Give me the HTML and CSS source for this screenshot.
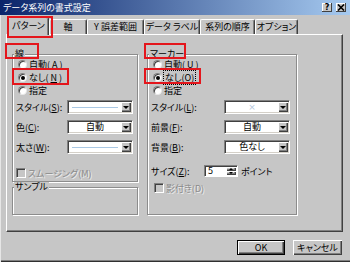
FILE: index.html
```html
<!DOCTYPE html>
<html lang="ja">
<head>
    <meta charset="UTF-8">
    <title>データ系列の書式設定</title>
    <link rel="stylesheet" href="styles.css">
</head>
<body>
    <div class="window">
        <div class="titlebar">
            <span class="title">データ系列の書式設定</span>
            <span class="tb-btns">
                <span class="tb-btn">?</span>
                <span class="tb-btn">
                    <svg width="8" height="7" viewBox="0 0 8 7"><path d="M1 0.5 L7 6.5 M7 0.5 L1 6.5" stroke="#000" stroke-width="1.6"/></svg>
                </span>
            </span>
        </div>

        <div class="tabs">
            <div class="tab active">パターン</div>
            <div class="tab">軸</div>
            <div class="tab">Y 誤差範囲</div>
            <div class="tab">データ ラベル</div>
            <div class="tab">系列の順序</div>
            <div class="tab">オプション</div>
        </div>

        <div class="panel">
            <div class="col-left">
                <fieldset class="group g-line">
                    <legend>線</legend>
                    <div class="opt"><span class="radio"></span>自動(<u>A</u>)</div>
                    <div class="opt"><span class="radio on"></span>なし(<u>N</u>)</div>
                    <div class="opt"><span class="radio"></span>指定</div>
                    <div class="field first">
                        <span class="lbl">スタイル(<u>S</u>):</span>
                        <span class="combo"><span class="val line"></span><span class="arrow"></span></span>
                    </div>
                    <div class="field">
                        <span class="lbl">色(<u>C</u>):</span>
                        <span class="combo"><span class="val">自動</span><span class="arrow"></span></span>
                    </div>
                    <div class="field">
                        <span class="lbl">太さ(<u>W</u>):</span>
                        <span class="combo"><span class="val line"></span><span class="arrow"></span></span>
                    </div>
                    <div class="check smooth"><span class="box"></span>スムージング(M)</div>
                </fieldset>
                <fieldset class="group g-sample">
                    <legend>サンプル</legend>
                </fieldset>
            </div>

            <fieldset class="group g-marker">
                <legend>マーカー</legend>
                <div class="opt"><span class="radio"></span>自動(<u>U</u>)</div>
                <div class="opt"><span class="radio on"></span><span class="focus">なし(<u>O</u>)</span></div>
                <div class="opt"><span class="radio"></span>指定</div>
                <div class="field first">
                    <span class="lbl">スタイル(<u>L</u>):</span>
                    <span class="combo"><span class="val cross">×</span><span class="arrow"></span></span>
                </div>
                <div class="field">
                    <span class="lbl">前景(<u>F</u>):</span>
                    <span class="combo"><span class="val">自動</span><span class="arrow"></span></span>
                </div>
                <div class="field">
                    <span class="lbl">背景(<u>B</u>):</span>
                    <span class="combo"><span class="val">色なし</span><span class="arrow"></span></span>
                </div>
                <div class="size-row">
                    <span class="lbl">サイズ(<u>Z</u>):</span>
                    <span class="spin">
                        <span class="num">5</span>
                        <span class="arrows"><span class="up"></span><span class="down"></span></span>
                    </span>
                    <span class="unit">ポイント</span>
                </div>
                <div class="check shadow"><span class="box"></span>影付き(D)</div>
            </fieldset>
        </div>

        <div class="buttons">
            <button type="button" class="btn default">OK</button>
            <button type="button" class="btn cancel">キャンセル</button>
        </div>

        <!-- 赤枠の注記 -->
        <div class="mark m-tab"></div>
        <div class="mark m-line"></div>
        <div class="mark m-none1"></div>
        <div class="mark m-marker"></div>
        <div class="mark m-none2"></div>
    </div>
</body>
</html>
```

FILE: styles.css
```css
* {
    box-sizing: border-box;
}

body {
    margin: 0;
    background-color: #c6c6c6;
    font-family: "Noto Sans CJK JP", "Noto Sans", sans-serif;
    font-size: 9px;
    font-feature-settings: "palt";
    color: #000;
}

.window {
    position: relative;
    width: 350px;
    height: 262px;
    background-color: #c6c6c6;
    box-shadow: inset 1px 0 #e6e6e6, inset 0 -1px #303030, inset 0 -2px #808080;
    overflow: hidden;
}

/* タイトルバー */
.titlebar {
    height: 15px;
    display: flex;
    align-items: center;
    justify-content: space-between;
    padding: 0 4px 0 3px;
    background: linear-gradient(to right, #0a246a, #a6caf0);
    color: #fff;
}

.title {
    line-height: 15px;
}

.tb-btns {
    display: flex;
    gap: 4px;
}

.tb-btn {
    width: 10px;
    height: 9px;
    display: flex;
    align-items: center;
    justify-content: center;
    background-color: #c6c6c6;
    box-shadow: inset -1px -1px #404040, inset 1px 1px #fff;
    color: #000;
    font: bold 8px/9px "DejaVu Sans", sans-serif;
}

/* タブ */
.tabs {
    height: 19px;
    display: flex;
    align-items: flex-end;
    padding-left: 8px;
}

.tab {
    height: 15px;
    line-height: 13px;
    text-align: center;
    border-top: 1px solid #fff;
    border-left: 1px solid #fff;
    border-right: 1px solid #404040;
    border-radius: 2px 2px 0 0;
    box-shadow: inset -1px 0 #808080;
}

.tab:nth-child(1) { width: 41px; }
.tab:nth-child(2) { width: 38px; }
.tab:nth-child(3) { width: 57px; }
.tab:nth-child(4) { width: 56px; }
.tab:nth-child(5) { width: 55px; }
.tab:nth-child(6) { width: 43px; }

.tab.active {
    position: relative;
    height: 18px;
    margin-bottom: -1px;
    line-height: 15px;
    background-color: #c6c6c6;
}

/* パネル */
.panel {
    height: 198px;
    margin: 0 7px 0 6px;
    padding: 14px 0 16px 5px;
    display: flex;
    gap: 9px;
    border: 1px solid;
    border-color: #fff #404040 #404040 #fff;
    box-shadow: inset -1px -1px #808080;
}

.col-left {
    width: 126px;
    display: flex;
    flex-direction: column;
}

.group {
    margin: 0;
    padding: 0;
    min-width: 0;
    border: 1px solid #8c8c8c;
    box-shadow: 1px 1px #fff, inset 1px 1px #fff;
}

.group legend {
    margin-left: 1px;
    padding: 0 1px;
    line-height: 10px;
    background-color: #c6c6c6;
}

.group legend + .opt {
    margin-top: -1px;
}

.g-line {
    padding-bottom: 2px;
}

.g-sample {
    flex: 1;
}

.g-marker {
    width: 150px;
}

/* ラジオボタン */
.opt {
    height: 13px;
    display: flex;
    align-items: center;
    gap: 2px;
    padding-left: 5px;
}

.radio {
    position: relative;
    width: 9px;
    height: 9px;
    border-radius: 50%;
    background-color: #fff;
    border: 1px solid;
    border-color: #808080 #e8e8e8 #e8e8e8 #808080;
    box-shadow: inset 1px 1px #404040;
}

.radio.on::after {
    content: "";
    position: absolute;
    left: 2px;
    top: 2px;
    width: 4px;
    height: 4px;
    border-radius: 50%;
    background-color: #000;
}

.focus {
    outline: 1px dotted #000;
    padding: 0 1px;
}

/* コンボボックス */
.field {
    height: 14px;
    margin-top: 6px;
    display: flex;
    align-items: center;
    padding-left: 3px;
}

.field.first {
    margin-top: 3px;
}

.g-line .lbl {
    width: 51px;
}

.g-marker .field .lbl {
    width: 73px;
}

.combo {
    width: 66px;
    height: 14px;
    display: flex;
    padding: 1px;
    background-color: #fff;
    border: 1px solid;
    border-color: #808080 #fff #fff #808080;
    box-shadow: inset 1px 1px #404040, inset -1px -1px #d4d0c8;
}

.combo .val {
    flex: 1;
    text-align: center;
    line-height: 10px;
}

.combo .val.line {
    margin: 0 3px;
    background: linear-gradient(#a9c8e4, #a9c8e4) center / 100% 1px no-repeat;
}

.combo .val.cross {
    color: #b4c6dc;
    font-family: "DejaVu Sans", sans-serif;
}

.combo .arrow,
.spin .up,
.spin .down {
    position: relative;
    background-color: #c6c6c6;
    box-shadow: inset 1px 1px #fff, inset -1px -1px #404040, inset -2px -2px #808080;
}

.combo .arrow {
    width: 10px;
}

.combo .arrow::after {
    content: "";
    position: absolute;
    left: 2px;
    top: 4px;
    border-left: 3px solid transparent;
    border-right: 3px solid transparent;
    border-top: 3px solid #000;
}

/* サイズ */
.size-row {
    height: 12px;
    margin-top: 11px;
    display: flex;
    align-items: center;
    padding-left: 3px;
}

.size-row .lbl {
    width: 53px;
}

.spin {
    width: 34px;
    height: 12px;
    display: flex;
    padding: 1px;
    background-color: #fff;
    border: 1px solid;
    border-color: #808080 #fff #fff #808080;
    box-shadow: inset 1px 1px #404040;
}

.spin .num {
    flex: 1;
    padding-left: 2px;
    line-height: 8px;
}

.spin .arrows {
    width: 10px;
    display: flex;
    flex-direction: column;
}

.spin .up,
.spin .down {
    flex: 1;
}

.spin .up::after,
.spin .down::after {
    content: "";
    position: absolute;
    left: 3px;
    top: 1px;
    border-left: 2px solid transparent;
    border-right: 2px solid transparent;
}

.spin .up::after {
    border-bottom: 2px solid #000;
}

.spin .down::after {
    border-top: 2px solid #000;
}

.unit {
    margin-left: 3px;
}

/* チェックボックス(無効) */
.check {
    height: 12px;
    display: flex;
    align-items: center;
    gap: 2px;
    color: #8a8a8a;
    text-shadow: 1px 1px #eee;
}

.check .box {
    width: 10px;
    height: 10px;
    border: 1px solid;
    border-color: #808080 #fff #fff #808080;
    box-shadow: inset 1px 1px #404040;
    background-color: #c6c6c6;
}

.check.smooth {
    margin-top: 13px;
    padding-left: 3px;
}

.check.shadow {
    margin-top: 5px;
    padding-left: 6px;
}

/* ボタン */
.buttons {
    display: flex;
    justify-content: flex-end;
    gap: 8px;
    margin-top: 8px;
    padding-right: 8px;
}

.btn {
    width: 48px;
    height: 15px;
    padding: 0;
    border: none;
    font: inherit;
    line-height: 13px;
    background-color: #c6c6c6;
    box-shadow: inset 1px 1px #fff, inset -1px -1px #404040, inset -2px -2px #808080;
}

.btn.default {
    border: 1px solid #000;
}

.btn.cancel {
    width: 49px;
}

/* 赤枠 */
.mark {
    position: absolute;
    border: 2px solid #e4161c;
}

.m-tab { left: 7px; top: 16px; width: 46px; height: 22px; }
.m-line { left: 5px; top: 43px; width: 34px; height: 16px; }
.m-none1 { left: 12px; top: 68px; width: 57px; height: 17px; }
.m-marker { left: 144px; top: 43px; width: 42px; height: 16px; }
.m-none2 { left: 144px; top: 68px; width: 57px; height: 16px; }
```
